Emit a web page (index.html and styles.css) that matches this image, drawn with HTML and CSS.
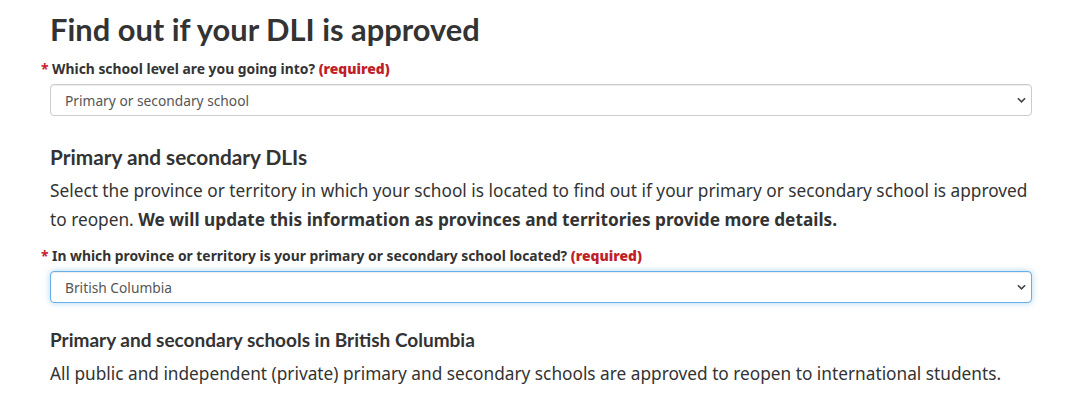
FILE: index.html
```html
<!DOCTYPE html>
<html lang="en">
<head>
<meta charset="utf-8">
<title>Find out if your DLI is approved</title>
<link rel="stylesheet" href="styles.css">
</head>
<body>
<main class="page">
  <h1 class="title">Find out if your DLI is approved</h1>

  <div class="field">
    <label class="label" for="level"><span class="star">*</span> Which school level are you going into? <strong class="req">(required)</strong></label>
    <div class="select-wrap">
      <select id="level" class="select">
        <option>Primary or secondary school</option>
      </select>
      <svg class="chev" viewBox="0 0 10 6" width="9" height="6" aria-hidden="true"><path d="M1 1 L5 5 L9 1" fill="none" stroke="#444" stroke-width="1.8"/></svg>
    </div>
  </div>

  <h2 class="h2">Primary and secondary DLIs</h2>
  <p class="text first">Select the province or territory in which your school is located to find out if your primary or secondary school is approved to reopen. <strong>We will update this information as provinces and territories provide more details.</strong></p>

  <div class="field">
    <label class="label" for="prov"><span class="star">*</span> In which province or territory is your primary or secondary school located? <strong class="req">(required)</strong></label>
    <div class="select-wrap">
      <select id="prov" class="select focus">
        <option>British Columbia</option>
      </select>
      <svg class="chev" viewBox="0 0 10 6" width="9" height="6" aria-hidden="true"><path d="M1 1 L5 5 L9 1" fill="none" stroke="#444" stroke-width="1.8"/></svg>
    </div>
  </div>

  <h3 class="h3">Primary and secondary schools in British Columbia</h3>
  <p class="text">All public and independent (private) primary and secondary schools are approved to reopen to international students.</p>
</main>
</body>
</html>
```
FILE: styles.css
```css
html, body {
  margin: 0;
  padding: 0;
  background: #fff;
}
body {
  font-family: "Noto Sans", "Open Sans", sans-serif;
  color: #333;
}
.page {
  padding: 12px 48px 0 50px;
}
.title {
  font-family: Lato, sans-serif;
  font-weight: 700;
  font-size: 30.85px;
  line-height: 36px;
  margin: 0 0 12px;
  color: #333;
}
.field {
  margin: 0;
}
.label {
  display: block;
  font-size: 13.85px;
  font-weight: 700;
  line-height: 18px;
  margin: 0 0 6px -9px;
  color: #333;
}
.star {
  color: #c8202a;
}
.req {
  color: #c01f2a;
}
.select-wrap {
  position: relative;
}
.select {
  display: block;
  width: 100%;
  height: 32px;
  box-sizing: border-box;
  -webkit-appearance: none;
  appearance: none;
  background: #fff;
  border: 1px solid #ccc;
  border-radius: 4px;
  padding: 0 14px;
  font-family: "Noto Sans", "Open Sans", sans-serif;
  font-size: 13.75px;
  color: #555;
  box-shadow: inset 0 1px 1px rgba(0,0,0,.075);
}
.select.focus {
  border-color: #66afe9;
  box-shadow: inset 0 1px 1px rgba(0,0,0,.075), 0 0 6px rgba(102,175,233,.5);
}
.chev {
  position: absolute;
  right: 6px;
  top: 13px;
}
.h2 {
  font-family: Lato, sans-serif;
  font-weight: 700;
  font-size: 20.8px;
  line-height: 25px;
  margin: 28px 0 7px;
}
.h3 {
  font-family: Lato, sans-serif;
  font-weight: 700;
  font-size: 19px;
  line-height: 23px;
  margin: 25px 0 8px;
}
.text {
  font-size: 17.25px;
  line-height: 29px;
  margin: 0;
}
.text.first {
  margin-bottom: 13px;
}
```
